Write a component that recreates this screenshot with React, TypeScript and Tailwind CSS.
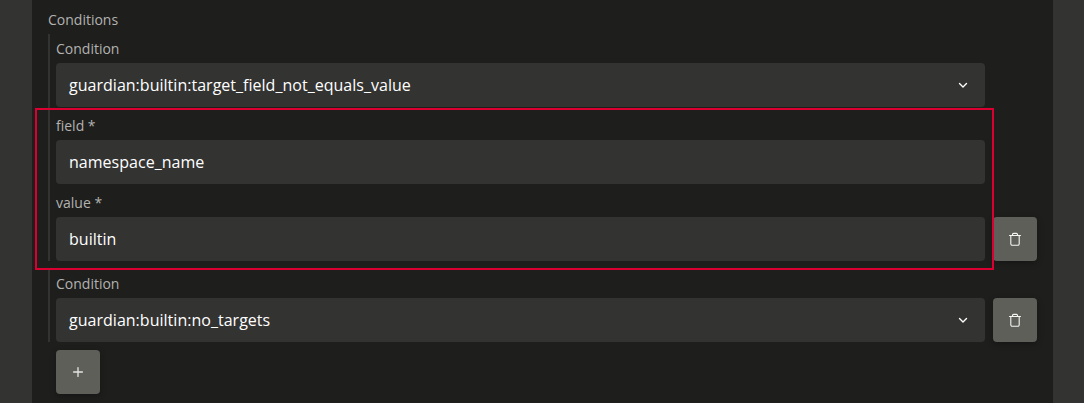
import type { ReactNode } from "react";

function Label({ children }: { children: ReactNode }) {
  return <div className="h-[29px] pt-[5px] text-sm leading-[20px] text-[#b2b2b0]">{children}</div>;
}

function TrashIcon() {
  return (
    <svg width="16" height="16" viewBox="0 0 16 16" fill="none" stroke="#f4f4f2" strokeLinecap="round" strokeLinejoin="round">
      <path d="M2.5 4.5h11" strokeWidth="1.1" />
      <path d="M5.5 4.2V3.6a1.2 1.2 0 0 1 1.2-1.2h2.6a1.2 1.2 0 0 1 1.2 1.2v.6" strokeWidth="1.1" />
      <path d="M3.8 4.7v8.1a1.4 1.4 0 0 0 1.4 1.4h5.6a1.4 1.4 0 0 0 1.4-1.4V4.7" strokeWidth="1.1" />
    </svg>
  );
}

function PlusIcon() {
  return (
    <svg width="16" height="16" viewBox="0 0 16 16" fill="none" stroke="#e4e4e2" strokeWidth="1.3" strokeLinecap="round">
      <path d="M8 3.6v8.8M3.6 8h8.8" />
    </svg>
  );
}

function IconButton({ label, children }: { label: string; children: ReactNode }) {
  return (
    <button
      aria-label={label}
      className="flex size-11 shrink-0 items-center justify-center rounded bg-[#5f5f5a] shadow-[0_2px_6px_rgba(0,0,0,0.3)]"
    >
      {children}
    </button>
  );
}

function Field({ label, value, select = false }: { label: string; value: string; select?: boolean }) {
  return (
    <div>
      <Label>{label}</Label>
      <div className="flex h-11 items-center justify-between rounded bg-[#333331] pr-[14px] pl-[13px] text-base tracking-[0.02px] text-white">
        <span>{value}</span>
        {select && (
          <svg width="16" height="16" viewBox="0 0 16 16" fill="none" stroke="#fff" strokeWidth="1.4" strokeLinecap="round" strokeLinejoin="round">
            <path d="M4.5 6.4 8 9.9l3.5-3.5" />
          </svg>
        )}
      </div>
    </div>
  );
}

function ConditionRow({ children }: { children: ReactNode }) {
  return (
    <div className="flex items-end gap-2 border-l-2 border-[#333331] pl-1.5">
      <div className="flex flex-1 flex-col gap-1">{children}</div>
      <IconButton label="Remove">
        <TrashIcon />
      </IconButton>
    </div>
  );
}

export default function App() {
  return (
    <div className="relative flex h-[403px] w-[1084px] overflow-hidden bg-[#333331] pr-[31px] pl-8 font-['Open_Sans',sans-serif]">
      <main className="flex flex-1 flex-col bg-[#1e1e1d] px-4 pt-[5px]">
        <Label>Conditions</Label>
        <div className="flex flex-col gap-2">
          <ConditionRow>
            <Field label="Condition" value="guardian:builtin:target_field_not_equals_value" select />
            <Field label="field *" value="namespace_name" />
            <Field label="value *" value="builtin" />
          </ConditionRow>
          <ConditionRow>
            <Field label="Condition" value="guardian:builtin:no_targets" select />
          </ConditionRow>
          <div className="pl-2">
            <IconButton label="Add">
              <PlusIcon />
            </IconButton>
          </div>
        </div>
      </main>
      <div className="pointer-events-none absolute top-[108px] left-[35px] h-[162px] w-[959px] border-2 border-[#dc0032]" />
    </div>
  );
}
